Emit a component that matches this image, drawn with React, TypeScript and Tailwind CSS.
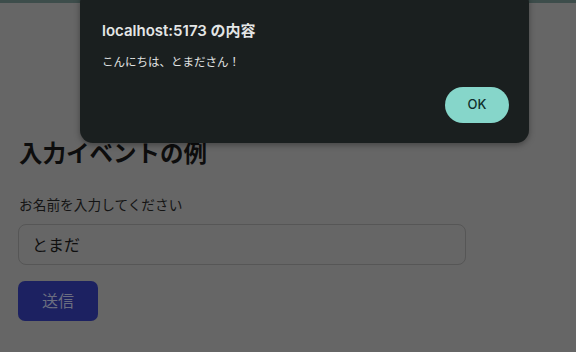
import React from "react";

export default function App() {
  const font = { fontFamily: 'Inter, "Noto Sans CJK JP", sans-serif' };
  return (
    <div
      className="relative w-[576px] h-[352px] overflow-hidden bg-[#666666]"
      style={font}
    >
      <div className="h-[3px] bg-[#3d4d4b]" />
      <div className="flex flex-col items-start pl-[18px] pt-[136px]">
        <h1 className="text-[23.5px] font-bold leading-[30px] text-[#0d0d0d] pl-[1px]">
          入力イベントの例
        </h1>
        <label className="mt-[26px] text-[13.7px] leading-[20px] text-[#141414] pl-[1px]">
          お名前を入力してください
        </label>
        <div className="mt-[9px] flex h-[41px] w-[448px] items-center rounded-[8px] border border-[#565656] px-[13px] text-[16px] text-[#0f0f0f]">
          とまだ
        </div>
        <div className="mt-[16px] flex h-[40px] w-[80px] items-center justify-center rounded-[7px] bg-[#1c2161] text-[16px] text-[#6b6e80]">
          送信
        </div>
      </div>

      <div className="absolute left-[80px] top-[-10px] flex h-[153px] w-[449px] flex-col rounded-[13px] bg-[#1a1f1f] pl-[22px] pr-[20px] pt-[30px] shadow-[0_2px_6px_rgba(0,0,0,0.35)]">
        <div className="text-[15px] font-semibold leading-[22px] text-[#e4e6e6]">
          localhost:5173 の内容
        </div>
        <div className="mt-[11px] text-[11.5px] leading-[18px] text-[#e2e4e4]">
          こんにちは、とまださん！
        </div>
        <div className="mt-[16px] flex justify-end">
          <div className="flex h-[36px] w-[64px] items-center justify-center rounded-full bg-[#86d6ca] text-[13px] font-medium text-[#0f2f2c]">
            OK
          </div>
        </div>
      </div>
    </div>
  );
}
